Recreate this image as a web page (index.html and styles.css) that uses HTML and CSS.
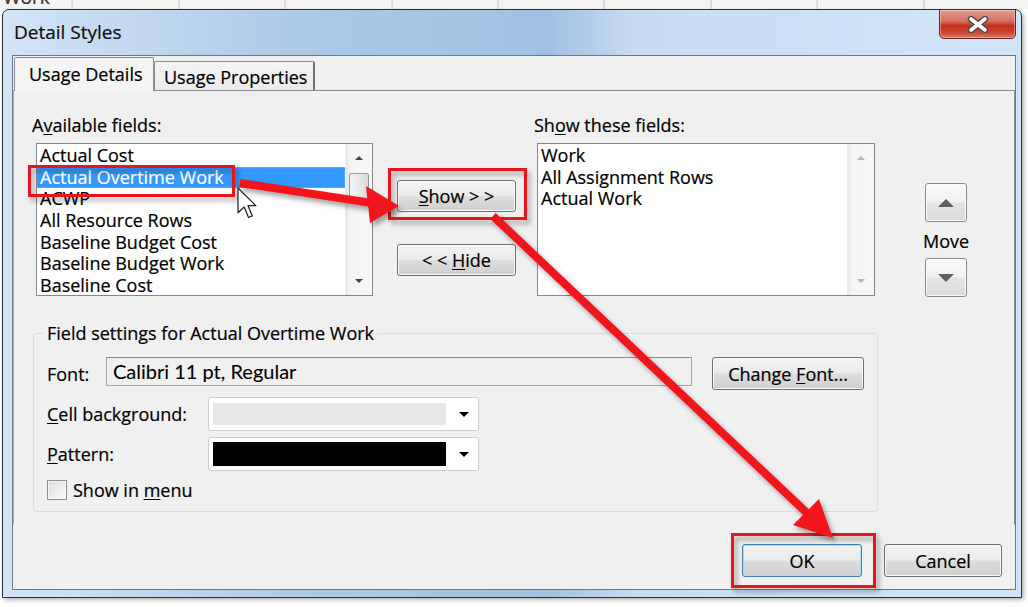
FILE: index.html
```html
<!DOCTYPE html>
<html lang="en">
<head>
  <meta charset="UTF-8" />
  <title>Detail Styles</title>
  <link rel="stylesheet" href="styles.css">
</head>
<body>

<!-- hoja de fondo (solo se ve una franja) -->
<div class="sheet"><span class="sheet-text">Work</span></div>

<div class="window">
  <div class="titlebar">
    <span class="title">Detail Styles</span>
    <div class="close">
      <svg width="22" height="17" viewBox="0 0 22 17">
        <path d="M4 3 L18 14 M18 3 L4 14" stroke="#4a4a4a" stroke-width="6.5" stroke-linecap="round"/>
        <path d="M4 3 L18 14 M18 3 L4 14" stroke="#fff" stroke-width="3.6" stroke-linecap="round"/>
      </svg>
    </div>
  </div>

  <div class="client">
    <div class="tabs">
      <div class="tab active">Usage Details</div>
      <div class="tab">Usage Properties</div>
    </div>

    <div class="page">
      <div class="fields">
        <div class="col-list">
          <div class="label">A<u>v</u>ailable fields:</div>
          <div class="listbox left">
            <ul class="items">
              <li>Actual Cost</li>
              <li class="selected">Actual Overtime Work</li>
              <li>ACWP</li>
              <li>All Resource Rows</li>
              <li>Baseline Budget Cost</li>
              <li>Baseline Budget Work</li>
              <li>Baseline Cost</li>
            </ul>
            <div class="scrollbar">
              <div class="scroll-btn"><span class="tri-up"></span></div>
              <div class="thumb"></div>
              <div class="scroll-space"></div>
              <div class="scroll-btn"><span class="tri-down"></span></div>
            </div>
          </div>
        </div>

        <div class="col-buttons">
          <button class="btn wide"><u>S</u>how &gt; &gt;</button>
          <button class="btn wide hide">&lt; &lt; <u>H</u>ide</button>
        </div>

        <div class="col-list right-col">
          <div class="label">Sh<u>o</u>w these fields:</div>
          <div class="listbox right">
            <ul class="items">
              <li>Work</li>
              <li>All Assignment Rows</li>
              <li>Actual Work</li>
            </ul>
            <div class="scrollbar disabled">
              <div class="scroll-btn"><span class="tri-up"></span></div>
              <div class="scroll-space"></div>
              <div class="scroll-btn"><span class="tri-down"></span></div>
            </div>
          </div>
        </div>

        <div class="col-move">
          <button class="btn move"><span class="tri-up big"></span></button>
          <div class="move-label">Move</div>
          <button class="btn move"><span class="tri-down big"></span></button>
        </div>
      </div>

      <fieldset class="group">
        <legend>Field settings for Actual Overtime Work</legend>

        <div class="setting-row font-row">
          <span class="setting-label short">Font:</span>
          <div class="textbox">Calibri 11 pt, Regular</div>
          <button class="btn change-font">Change <u>F</u>ont...</button>
        </div>

        <div class="setting-row combo-row">
          <span class="setting-label"><u>C</u>ell background:</span>
          <div class="combo">
            <span class="swatch light"></span>
            <span class="combo-arrow"></span>
          </div>
        </div>

        <div class="setting-row combo-row pattern">
          <span class="setting-label"><u>P</u>attern:</span>
          <div class="combo">
            <span class="swatch dark"></span>
            <span class="combo-arrow"></span>
          </div>
        </div>

        <div class="check-row">
          <span class="checkbox"></span>
          <span>Show in <u>m</u>enu</span>
        </div>
      </fieldset>
    </div>

    <div class="footer">
      <button class="btn ok">OK</button>
      <button class="btn cancel">Cancel</button>
    </div>
  </div>
</div>

<!-- anotaciones rojas encima del cuadro de diálogo -->
<svg class="annotations" width="1028" height="607" viewBox="0 0 1028 607">
  <defs>
    <filter id="sombra" x="-20%" y="-20%" width="140%" height="140%">
      <feDropShadow dx="3" dy="4" stdDeviation="2.5" flood-color="#000" flood-opacity="0.35"/>
    </filter>
  </defs>
  <g filter="url(#sombra)">
    <rect x="29.5" y="166.5" width="204" height="29" fill="none" stroke="#e8141c" stroke-width="3"/>
    <rect x="389.5" y="169.5" width="136" height="49" fill="none" stroke="#e8141c" stroke-width="3"/>
    <rect x="732.5" y="534.5" width="142" height="52" fill="none" stroke="#e8141c" stroke-width="3"/>
  </g>
  <g filter="url(#sombra)" fill="#f0141c">
    <line x1="240" y1="183" x2="372" y2="203" stroke="#f0141c" stroke-width="8"/>
    <polygon points="366,186 399,206 370,223"/>
    <line x1="493" y1="216" x2="808" y2="514" stroke="#f0141c" stroke-width="8"/>
    <polygon points="793,525 819,499 833,538"/>
  </g>
  <path d="M0 0 L0 16 L4 12.3 L6.8 19 L9.2 18 L6.5 11.4 L11.5 11.4 Z" transform="translate(238 188) scale(1.55)" fill="#fff" stroke="#222" stroke-width="0.8" stroke-linejoin="round"/>
</svg>

</body>
</html>
```

FILE: styles.css
```css
* {
  box-sizing: border-box;
}

body {
  margin: 0;
  width: 1028px;
  height: 607px;
  overflow: hidden;
  position: relative;
  background: #fff;
  font-family: 'Open Sans', 'Noto Sans', sans-serif;
  font-size: 18px;
  font-weight: 500;
  color: #000;
  -webkit-text-stroke: 0.2px #000;
}

u {
  text-decoration-thickness: 1px;
  text-underline-offset: 2px;
}

.sheet {
  height: 9px;
  overflow: hidden;
  background: #f4f4f4 repeating-linear-gradient(90deg, transparent 0 105.4px, #c4c4c4 105.4px 106.4px);
  background-position: -33.4px 0;
}

.sheet-text {
  display: block;
  margin-top: -13px;
  padding-left: 3px;
  line-height: 20px;
  font-size: 19px;
  color: #3a3a3a;
}

.window {
  margin-left: 2px;
  width: 1020px;
  height: 589px;
  border: 1px solid #2c3037;
  border-radius: 7px 7px 0 0;
  background: linear-gradient(90deg, #d2e4f7 0%, #c1d7ef 14%, #a9c7e6 32%, #a2c1e2 54%, #c7dcf2 62%, #d2e5f8 100%);
  box-shadow: 2px 2px 4px rgba(0, 0, 0, 0.3);
}

.titlebar {
  height: 45px;
  display: flex;
  justify-content: space-between;
  align-items: flex-start;
  padding: 0 5px 0 11px;
}

.title {
  padding-top: 10px;
  line-height: 24px;
  font-size: 19px;
  color: #111;
}

.close {
  margin-top: -1px;
  width: 77px;
  height: 30px;
  border: 1px solid #5b2a24;
  border-radius: 0 0 5px 5px;
  background: linear-gradient(#e39d91, #d4705f 40%, #c32f1b 56%, #cd4530 80%, #db7b63);
  box-shadow: inset 0 0 0 1px rgba(255, 220, 210, 0.45);
  display: flex;
  align-items: center;
  justify-content: center;
}

.client {
  margin: 0 5px 0 9px;
  height: 535px;
  border: 1px solid #6e7886;
  background: #f0f0f0;
}

.tabs {
  position: relative;
  z-index: 1;
  display: flex;
  align-items: flex-end;
  height: 35px;
  margin-bottom: -1px;
  padding-left: 1px;
}

.tab {
  border: 1px solid #898c95;
  border-bottom: none;
  border-radius: 2px 2px 0 0;
  line-height: 22px;
  white-space: nowrap;
}

.tab.active {
  width: 140px;
  height: 34px;
  padding: 5px 0 0 14px;
  background: #f4f4f4;
}

.tab:not(.active) {
  width: 161px;
  height: 29px;
  margin-bottom: 1px;
  padding: 4px 0 0 9px;
  background: linear-gradient(#f4f4f4, #ebebeb);
  border-right: 2px solid #707070;
}

.page {
  height: 435px;
  border: 1px solid #898c95;
  border-bottom-color: transparent;
  border-left-color: #a9adb4;
  padding: 23px 0 0 18px;
}

.fields {
  display: flex;
  align-items: flex-start;
}

.col-list {
  width: 341px;
}

.label {
  line-height: 22px;
  white-space: nowrap;
}

.listbox {
  display: flex;
  margin: 7px 0 0 4px;
  width: 337px;
  height: 153px;
  border: 1px solid #828790;
  background: #fff;
}

.listbox.right {
  margin-left: 3px;
  width: 338px;
}

.items {
  flex: 1;
  margin: 0;
  padding: 1px 0 0 0;
  list-style: none;
  overflow: hidden;
}

.items li {
  height: 21.67px;
  line-height: 21.67px;
  padding-left: 3px;
  white-space: nowrap;
}

.items li.selected {
  background: #3399ff;
  color: #fff;
  -webkit-text-stroke: 0.2px #fff;
  outline: 1px dotted #d9a35a;
  outline-offset: -1px;
}

.scrollbar {
  width: 27px;
  display: flex;
  flex-direction: column;
  background: linear-gradient(90deg, #e6e6e6, #f4f4f4 15%, #f7f7f7);
  border-left: 1px solid #ececec;
}

.scroll-btn {
  height: 28px;
  display: flex;
  align-items: center;
  justify-content: center;
}

.scroll-space {
  flex: 1;
}

.thumb {
  margin: 1px 3px 0 3px;
  height: 27px;
  border: 1px solid #9a9a9a;
  border-radius: 2px;
  background: linear-gradient(90deg, #f6f6f6, #e8e8e8 50%, #d9d9d9);
}

.tri-up, .tri-down {
  width: 0;
  height: 0;
  border-left: 4px solid transparent;
  border-right: 4px solid transparent;
}

.tri-up {
  border-bottom: 4px solid #444;
}

.tri-down {
  border-top: 4px solid #444;
}

.scrollbar.disabled .tri-up {
  border-bottom-color: #b4b4b4;
}

.scrollbar.disabled .tri-down {
  border-top-color: #b4b4b4;
}

.tri-up.big {
  border-left-width: 8px;
  border-right-width: 8px;
  border-bottom: 8px solid #5e5e5e;
}

.tri-down.big {
  border-left-width: 8px;
  border-right-width: 8px;
  border-top: 8px solid #5e5e5e;
}

.btn {
  font-family: 'Open Sans', 'Noto Sans', sans-serif;
  font-size: 18px;
  font-weight: 500;
  color: #000;
  -webkit-text-stroke: 0.2px #000;
  padding: 0;
  border: 1px solid #707070;
  border-radius: 3px;
  background: linear-gradient(#f3f3f3 0%, #ebebeb 48%, #dddddd 52%, #cfcfcf 100%);
  box-shadow: inset 0 0 0 1px #fbfbfb;
  line-height: 1;
  white-space: nowrap;
}

.col-buttons {
  margin-left: 24px;
  width: 119px;
  padding-top: 66px;
  display: flex;
  flex-direction: column;
}

.btn.wide {
  width: 119px;
  height: 32px;
}

.btn.hide {
  margin-top: 32px;
}

.right-col {
  margin-left: 18px;
}

.col-move {
  margin-left: 50px;
  width: 42px;
  padding-top: 69px;
  display: flex;
  flex-direction: column;
  align-items: center;
}

.btn.move {
  width: 42px;
  height: 39px;
  display: flex;
  align-items: center;
  justify-content: center;
  border-color: #8a8a8a;
  background: linear-gradient(#fafafa 0%, #f1f1f1 48%, #e4e4e4 52%, #dcdcdc 100%);
}

.move-label {
  margin: 8px 0 6px;
  line-height: 22px;
}

.group {
  margin: 25px 0 0 1px;
  width: 845px;
  min-width: 0;
  padding: 13px 0 11px 13px;
  border: 1px solid #d5dfe5;
  border-radius: 4px;
}

.group legend {
  padding: 0 4px;
  margin-left: -4px;
  line-height: 22px;
}

.setting-row {
  display: flex;
  align-items: center;
}

.font-row {
  height: 33px;
}

.setting-label {
  width: 161px;
  line-height: 22px;
  white-space: nowrap;
}

.setting-label.short {
  width: 59px;
}

.textbox {
  align-self: flex-start;
  width: 586px;
  height: 29px;
  border: 1px solid #a6a6a6;
  border-top-color: #8c8c8c;
  background: #f0f0f0;
  padding-left: 6px;
  font-family: Lato, 'Open Sans', sans-serif;
  font-size: 20px;
  font-weight: 400;
  -webkit-text-stroke: 0.1px #000;
  line-height: 26px;
}

.btn.change-font {
  margin-left: 20px;
  width: 152px;
  height: 33px;
}

.combo-row {
  margin-top: 7px;
}

.combo-row.pattern {
  margin-top: 6px;
}

.combo {
  width: 271px;
  height: 34px;
  border: 1px solid #cfcfcf;
  border-radius: 3px;
  background: #fff;
  padding: 5px 0 5px 4px;
  display: flex;
  align-items: center;
}

.swatch {
  width: 233px;
  height: 22px;
}

.swatch.light {
  background: #e8e8e8;
}

.swatch.dark {
  height: 24px;
  background: #000;
}

.combo-arrow {
  margin-left: auto;
  margin-right: 9px;
  width: 0;
  height: 0;
  border-left: 5px solid transparent;
  border-right: 5px solid transparent;
  border-top: 5px solid #000;
}

.check-row {
  margin-top: 9px;
  height: 20px;
  display: flex;
  align-items: center;
  line-height: 22px;
}

.checkbox {
  width: 20px;
  height: 20px;
  margin-right: 6px;
  border: 1px solid #8e8f8f;
  background: linear-gradient(135deg, #dcdcdc, #fbfbfb);
  box-shadow: inset 0 0 0 1px #f4f4f4;
}

.footer {
  display: flex;
  justify-content: flex-end;
  gap: 22px;
  padding: 19px 13px 0 0;
}

.btn.ok {
  width: 120px;
  height: 33px;
  border-color: #3c7fb1;
  box-shadow: inset 0 0 0 1px #9fe3fb;
}

.btn.cancel {
  width: 118px;
  height: 33px;
}

.annotations {
  position: absolute;
  top: 0;
  left: 0;
  pointer-events: none;
}
```
